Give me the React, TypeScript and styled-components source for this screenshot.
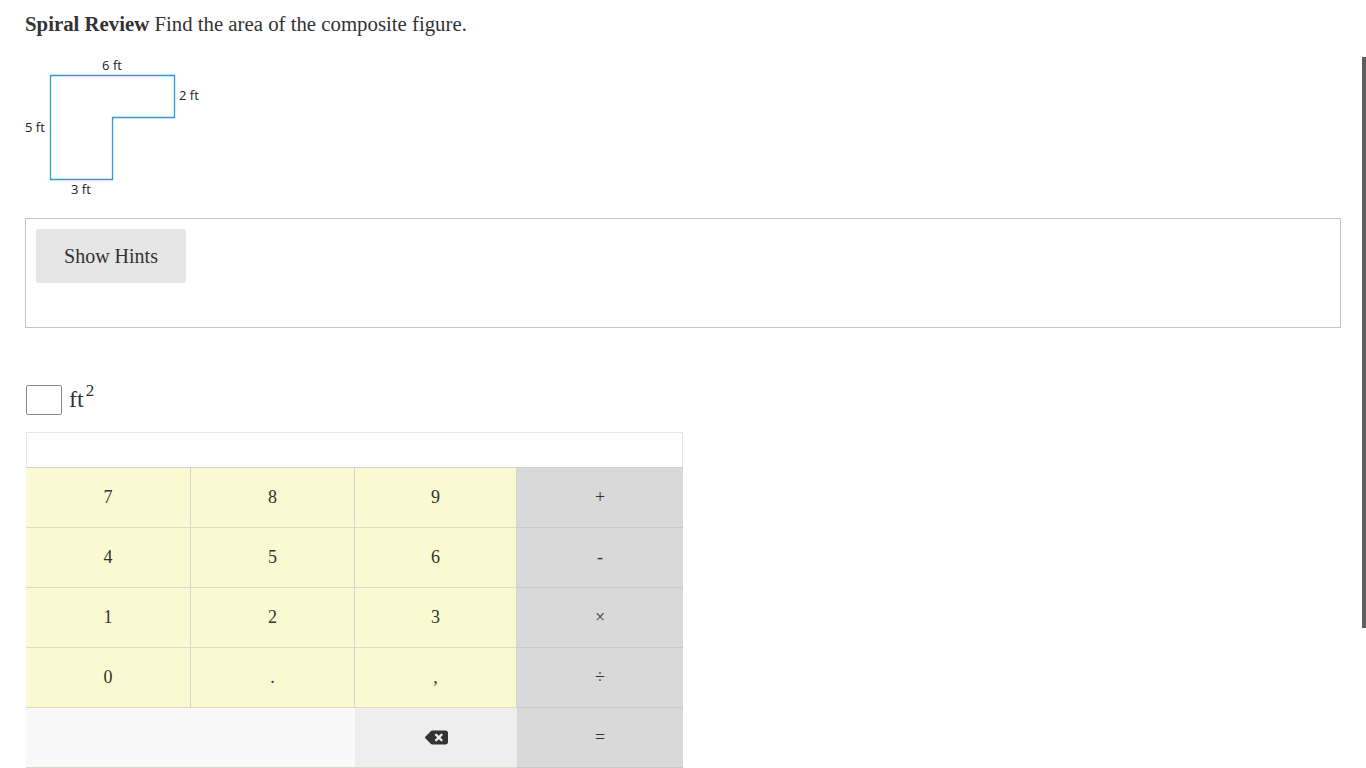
import styled, { createGlobalStyle } from 'styled-components'
import { FaBackspace } from 'react-icons/fa'

const GlobalStyle = createGlobalStyle`
    html, body {
        margin: 0;
        padding: 0;
        background: #fff;
    }
    body {
        font-family: 'Liberation Serif', 'Times New Roman', serif;
        color: #333;
        overflow: hidden;
    }
`

const Page = styled.div`
    padding: 11px 25px 0 25px;
`

const Prompt = styled.p`
    margin: 0;
    font-size: 20.8px;
    line-height: 26px;
    color: #333;
    b {
        font-weight: bold;
    }
`

const Figure = styled.svg`
    display: block;
    margin-top: 18px;
`

const HintsBox = styled.div`
    margin-top: 18px;
    border: 1px solid #c4c4c4;
    padding: 10px;
    box-sizing: border-box;
    height: 110px;
`

const HintButton = styled.button`
    width: 150px;
    height: 54px;
    border: none;
    border-radius: 3px;
    background: #e6e6e6;
    font-family: 'Liberation Serif', 'Times New Roman', serif;
    font-size: 20px;
    color: #333;
    cursor: pointer;
`

const AnswerRow = styled.div`
    display: flex;
    align-items: flex-end;
    gap: 7px;
    margin-top: 57px;
    padding-left: 1px;
`

const AnswerInput = styled.input`
    width: 36px;
    height: 30px;
    box-sizing: border-box;
    border: 1px solid #8a8a8a;
    border-radius: 2px;
    margin: 0;
`

const Unit = styled.span`
    font-size: 24px;
    line-height: 26px;
    padding-bottom: 3px;
    color: #333;
    sup {
        font-size: 17px;
        margin-left: 2px;
        vertical-align: 11px;
        line-height: 0;
    }
`

const Keypad = styled.div`
    margin-top: 17px;
    margin-left: 1px;
    width: 657px;
`

const Display = styled.div`
    height: 35px;
    box-sizing: border-box;
    border: 1px solid #e8e8e8;
    border-bottom: none;
    background: #fff;
`

const KeyGrid = styled.div`
    display: grid;
    grid-template-columns: 165px 164px 162px 166px;
    grid-auto-rows: 60px;
    border-top: 1px solid #d2d2d2;
`

const Key = styled.div<{ $tone: 'digit' | 'op' | 'blank' | 'del'; $span?: number }>`
    display: flex;
    align-items: center;
    justify-content: center;
    box-sizing: border-box;
    grid-column: span ${(p) => p.$span ?? 1};
    font-size: 18px;
    color: #333;
    border-bottom: 1px solid ${(p) => (p.$tone === 'op' ? '#c9c9c9' : '#d9d9cc')};
    border-right: ${(p) => (p.$tone === 'digit' ? '1px solid #d6d6c8' : 'none')};
    background: ${(p) =>
        p.$tone === 'digit'
            ? '#fafad2'
            : p.$tone === 'op'
              ? '#d9d9d9'
              : p.$tone === 'del'
                ? '#eeeeee'
                : '#f9f9f9'};
`

const ScrollThumb = styled.div`
    position: fixed;
    right: 0;
    top: 57px;
    width: 4px;
    height: 571px;
    background: #5e5e5e;
`

const rows: string[][] = [
    ['7', '8', '9', '+'],
    ['4', '5', '6', '-'],
    ['1', '2', '3', '×'],
    ['0', '.', ',', '÷'],
]

const ShapeFigure = () => (
    <Figure width="180" height="145" viewBox="0 0 180 145">
        <path
            d="M25.5 20.5 H149.5 V62.5 H87.5 V124.5 H25.5 Z"
            fill="none"
            stroke="#2b9ad6"
            strokeWidth="1.3"
        />
        <g fontFamily="'Open Sans', 'Noto Sans', sans-serif" fontSize="13" fill="#222">
            <text x="87" y="15" textAnchor="middle">6 ft</text>
            <text x="154" y="45">2 ft</text>
            <text x="0" y="77">5 ft</text>
            <text x="46" y="139">3 ft</text>
        </g>
    </Figure>
)

export default function App() {
    return (
        <Page>
            <GlobalStyle />
            <Prompt>
                <b>Spiral Review</b> Find the area of the composite figure.
            </Prompt>
            <ShapeFigure />
            <HintsBox>
                <HintButton>Show Hints</HintButton>
            </HintsBox>
            <AnswerRow>
                <AnswerInput type="text" />
                <Unit>
                    ft<sup>2</sup>
                </Unit>
            </AnswerRow>
            <Keypad>
                <Display />
                <KeyGrid>
                    {rows.map((row) =>
                        row.map((k, i) => (
                            <Key key={k} $tone={i === 3 ? 'op' : 'digit'}>
                                {k}
                            </Key>
                        ))
                    )}
                    <Key $tone="blank" $span={2} />
                    <Key $tone="del">
                        <FaBackspace size={23} color="#333" />
                    </Key>
                    <Key $tone="op">=</Key>
                </KeyGrid>
            </Keypad>
            <ScrollThumb />
        </Page>
    )
}
